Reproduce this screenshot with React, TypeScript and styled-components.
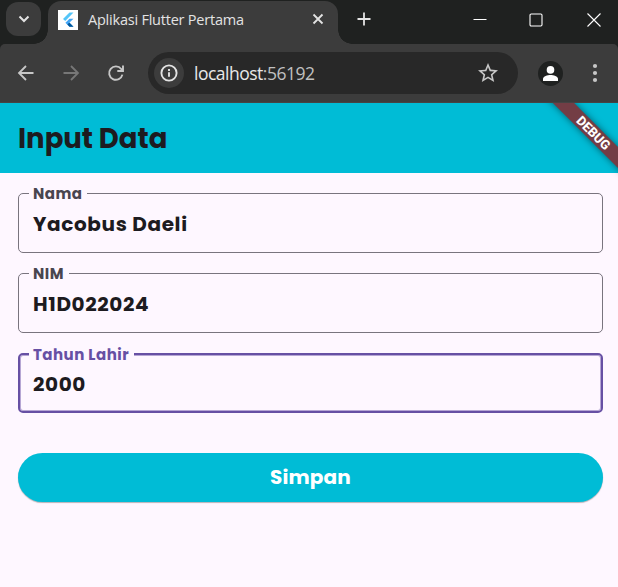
import React from "react";
import styled, { createGlobalStyle } from "styled-components";

const GlobalStyle = createGlobalStyle`
  * { box-sizing: border-box; }
  body { margin: 0; background: #fef7ff; }
  button { border: 0; padding: 0; background: none; color: inherit; font: inherit; }
`;

const Window = styled.div`
  width: 618px;
  height: 587px;
  display: flex;
  flex-direction: column;
  overflow: hidden;
  background: #fef7ff;
  font-family: "Poppins", Inter, "Open Sans", sans-serif;
`;

const TabStrip = styled.header`
  height: 44px;
  flex: none;
  display: flex;
  background: #1f2120;
  color: #e3e3e3;
  font-family: "Segoe UI", "Open Sans", sans-serif;
`;

const TabSearch = styled.button`
  width: 35px;
  height: 34px;
  margin: 2px 7px 0 6px;
  border-radius: 12px;
  background: #3c3c3c;
  display: grid;
  place-items: center;
`;

const Tab = styled.div`
  position: relative;
  width: 290px;
  height: 43px;
  margin-top: 1px;
  padding: 0 13px 6px 10px;
  display: flex;
  align-items: center;
  background: #3c3c3c;
  border-radius: 13px 13px 0 0;
  &::before, &::after {
    content: "";
    position: absolute;
    bottom: 0;
    width: 14px;
    height: 14px;
  }
  &::before {
    right: 100%;
    background: radial-gradient(circle at 0 0, transparent 13.5px, #3c3c3c 14px);
  }
  &::after {
    left: 100%;
    background: radial-gradient(circle at 100% 0, transparent 13.5px, #3c3c3c 14px);
  }
`;

const TabTitle = styled.span`
  margin-left: 10px;
  flex: 1;
  font-size: 14.5px;
  letter-spacing: -0.22px;
  line-height: 20px;
  white-space: nowrap;
`;

const NewTab = styled.button`
  width: 51px;
  height: 38px;
  display: grid;
  place-items: center;
`;

const WindowControls = styled.div`
  margin-left: auto;
  height: 40px;
  width: 166px;
  display: grid;
  grid-template-columns: 56px 56px 54px;
  place-items: center;
  color: #fff;
  & > :last-child { margin-left: 6px; }
`;

const Toolbar = styled.nav`
  height: 59px;
  flex: none;
  display: flex;
  align-items: center;
  background: #3c3c3c;
  border-bottom: 1px solid #464343;
  border-radius: 5px 5px 0 0;
  color: #c7c7c7;
  padding: 0 0 0 3px;
`;

const ToolbarHolder = styled.div`
  background: #1f2120;
  flex: none;
`;

const ToolButton = styled.button<{ $dim?: boolean }>`
  width: 45px;
  height: 42px;
  flex: none;
  display: grid;
  place-items: center;
  color: ${(p) => (p.$dim ? "#777" : "#c7c7c7")};
`;

const MenuButton = styled(ToolButton)`
  width: 44px;
  margin-left: 10px;
`;

const AddressBar = styled.div`
  width: 370px;
  height: 42px;
  flex: none;
  margin-left: 10px;
  padding: 0 18px 0 6px;
  border-radius: 21px;
  background: #282828;
  display: flex;
  align-items: center;
  font-family: "Segoe UI", "Open Sans", sans-serif;
`;

const SiteInfo = styled.span`
  width: 30px;
  height: 30px;
  border-radius: 50%;
  background: #3c3c3c;
  color: #e3e3e3;
  display: grid;
  place-items: center;
`;

const Url = styled.span`
  flex: 1;
  margin-left: 10px;
  color: #e8e8e8;
  font-size: 17.5px;
  letter-spacing: -0.5px;
  line-height: 24px;
`;

const Port = styled.span`
  color: #c0c0c0;
`;

const Avatar = styled.span`
  width: 25px;
  height: 25px;
  flex: none;
  margin-left: 20px;
  border-radius: 50%;
  background: #1f2120;
  display: grid;
  place-items: center;
`;

const AppBar = styled.div`
  position: relative;
  height: 70px;
  flex: none;
  padding: 2px 18px 0;
  display: flex;
  align-items: center;
  background: #00bcd6;
`;

const Heading = styled.h1`
  margin: 0;
  color: #1d1b20;
  font-size: 27.5px;
  font-weight: 700;
  line-height: 40px;
`;

const BannerCorner = styled.div`
  position: absolute;
  top: 0;
  right: 0;
  width: 90px;
  height: 90px;
  overflow: hidden;
  pointer-events: none;
`;

const Banner = styled.div`
  position: absolute;
  left: 2.5px;
  top: 19.75px;
  width: 120px;
  height: 15px;
  padding-left: 7px;
  transform: rotate(45deg);
  background: #733d45;
  box-shadow: 0 0 7px rgba(0, 0, 0, 0.5);
  color: #fff;
  font: 800 13px/15px Roboto, sans-serif;
  text-align: center;
`;

const Form = styled.form`
  padding: 10px 15px 0 18px;
  display: flex;
  flex-direction: column;
`;

const Outline = styled.fieldset<{ $focused?: boolean }>`
  min-width: 0;
  height: 70px;
  margin: 0 0 10px;
  padding: 0 0 0 ${(p) => (p.$focused ? 9 : 10)}px;
  border: ${(p) => (p.$focused ? "2px solid #6750a4" : "1px solid #79747e")};
  border-radius: 5px;
  color: ${(p) => (p.$focused ? "#6750a4" : "#49454f")};
  box-shadow: ${(p) => (p.$focused ? "inset 0 0 0 1px #b6a6d4" : "none")};
`;

const Label = styled.legend<{ $focused?: boolean }>`
  height: ${(p) => (p.$focused ? 22 : 20)}px;
  padding: 0 5px 0 4px;
  background: #fef7ff;
  font-size: 15px;
  font-weight: 700;
  line-height: ${(p) => (p.$focused ? 24 : 22)}px;
  letter-spacing: 0.469px;
`;

const Value = styled.div<{ $focused?: boolean }>`
  margin-left: 4px;
  padding-top: ${(p) => (p.$focused ? 4 : 6)}px;
  color: #1d1b20;
  font-size: 20px;
  font-weight: 700;
  line-height: 30px;
  letter-spacing: 0.625px;
`;

const Submit = styled.button`
  height: 48.5px;
  margin-top: 30px;
  border-radius: 25px;
  background: #00bcd6;
  box-shadow: 0 1px 1px rgba(0, 0, 0, 0.28);
  color: #fff;
  font-size: 20px;
  font-weight: 700;
  letter-spacing: 0.125px;
`;

const FlutterLogo = () => (
  <svg width="20" height="20" viewBox="0 0 20 20">
    <rect width="20" height="20" fill="#fff" />
    <path d="M11.5 2.5h4L7.3 11 5 8.9z" fill="#54c5f8" />
    <path d="M11.5 8.7h4l-4.2 4 4.2 4h-4l-4.1-4z" fill="#42a5f5" />
    <path d="m9.4 14.6 2-2 4.1 4.1h-4z" fill="#01579b" />
  </svg>
);

const Stroke = ({ d, size = 20, weight = 2 }: { d: string; size?: number; weight?: number }) => (
  <svg width={size} height={size} viewBox={`0 0 ${size} ${size}`} fill="none" stroke="currentColor" strokeWidth={weight}>
    <path d={d} />
  </svg>
);

const InfoIcon = () => (
  <svg width="18" height="18" viewBox="0 0 18 18" fill="none" stroke="currentColor" strokeWidth="1.9">
    <circle cx="9" cy="9" r="7.6" />
    <path d="M9 8.2v4.6M9 5v2" />
  </svg>
);

const ReloadIcon = () => (
  <svg width="18" height="18" viewBox="0 0 18 18" fill="none" stroke="currentColor" strokeWidth="1.9">
    <path d="M15.4 10.6A6.7 6.7 0 1 1 14.2 5L16 7M16 1.5V7h-5.7" />
  </svg>
);

const StarIcon = () => (
  <svg width="24" height="24" viewBox="0 0 24 24" fill="currentColor">
    <path d="m22 9.24-7.19-.62L12 2 9.19 8.63 2 9.24l5.46 4.73L5.82 21 12 17.27 18.18 21l-1.63-7.03zM12 15.4l-3.76 2.27 1-4.28-3.32-2.88 4.38-.38L12 6.1l1.71 4.04 4.38.38-3.32 2.88 1 4.28z" />
  </svg>
);

const PersonIcon = () => (
  <svg width="17" height="17" viewBox="0 0 17 17" fill="#fff">
    <circle cx="8.5" cy="4.9" r="3.8" />
    <path d="M1 16v-2c0-2.6 4.5-3.9 7.5-3.9S16 11.400 16 14v2z" />
  </svg>
);

const MenuIcon = () => (
  <svg width="6" height="20" viewBox="0 0 6 20" fill="currentColor">
    <circle cx="3" cy="3" r="2.1" />
    <circle cx="3" cy="10" r="2.1" />
    <circle cx="3" cy="17" r="2.1" />
  </svg>
);

const MaximizeIcon = () => (
  <svg width="14" height="14" viewBox="0 0 14 14" fill="none" stroke="currentColor" strokeWidth="1.1">
    <rect x="1" y="1" width="12" height="12" rx="1.2" />
  </svg>
);

const fields = [
  { label: "Nama", value: "Yacobus Daeli" },
  { label: "NIM", value: "H1D022024" },
  { label: "Tahun Lahir", value: "2000", focused: true },
];

export default function App() {
  return (
    <Window>
      <GlobalStyle />
      <TabStrip>
        <TabSearch aria-label="Search tabs"><Stroke size={12} d="M1.500 3.500 6 8l4.500-4.500" /></TabSearch>
        <Tab>
          <FlutterLogo />
          <TabTitle>Aplikasi Flutter Pertama</TabTitle>
          <Stroke size={14} weight={1.8} d="m2.500 1.500 9 9m0-9-9 9" />
        </Tab>
        <NewTab aria-label="New tab"><Stroke size={14} weight={1.8} d="M7 .5v13M.5 7h13" /></NewTab>
        <WindowControls>
          <Stroke size={14} weight={1} d="M.5 6.500h13" />
          <MaximizeIcon />
          <Stroke size={14} weight={1.1} d="m.5 .5 13 13m0-13-13 13" />
        </WindowControls>
      </TabStrip>
      <ToolbarHolder>
        <Toolbar>
          <ToolButton aria-label="Back"><Stroke size={18} weight={1.8} d="M16.500 9H3M9 2 2 9l7 7" /></ToolButton>
          <ToolButton $dim aria-label="Forward"><Stroke size={18} weight={1.8} d="M1.500 9H15M9 2l7 7-7 7" /></ToolButton>
          <ToolButton aria-label="Reload"><ReloadIcon /></ToolButton>
          <AddressBar>
            <SiteInfo><InfoIcon /></SiteInfo>
            <Url>localhost<Port>:56192</Port></Url>
            <StarIcon />
          </AddressBar>
          <Avatar><PersonIcon /></Avatar>
          <MenuButton aria-label="Menu"><MenuIcon /></MenuButton>
        </Toolbar>
      </ToolbarHolder>
      <AppBar>
        <Heading>Input Data</Heading>
        <BannerCorner><Banner>DEBUG</Banner></BannerCorner>
      </AppBar>
      <Form>
        {fields.map((f) => (
          <Outline key={f.label} $focused={f.focused}>
            <Label $focused={f.focused}>{f.label}</Label>
            <Value $focused={f.focused}>{f.value}</Value>
          </Outline>
        ))}
        <Submit type="button">Simpan</Submit>
      </Form>
    </Window>
  );
}
